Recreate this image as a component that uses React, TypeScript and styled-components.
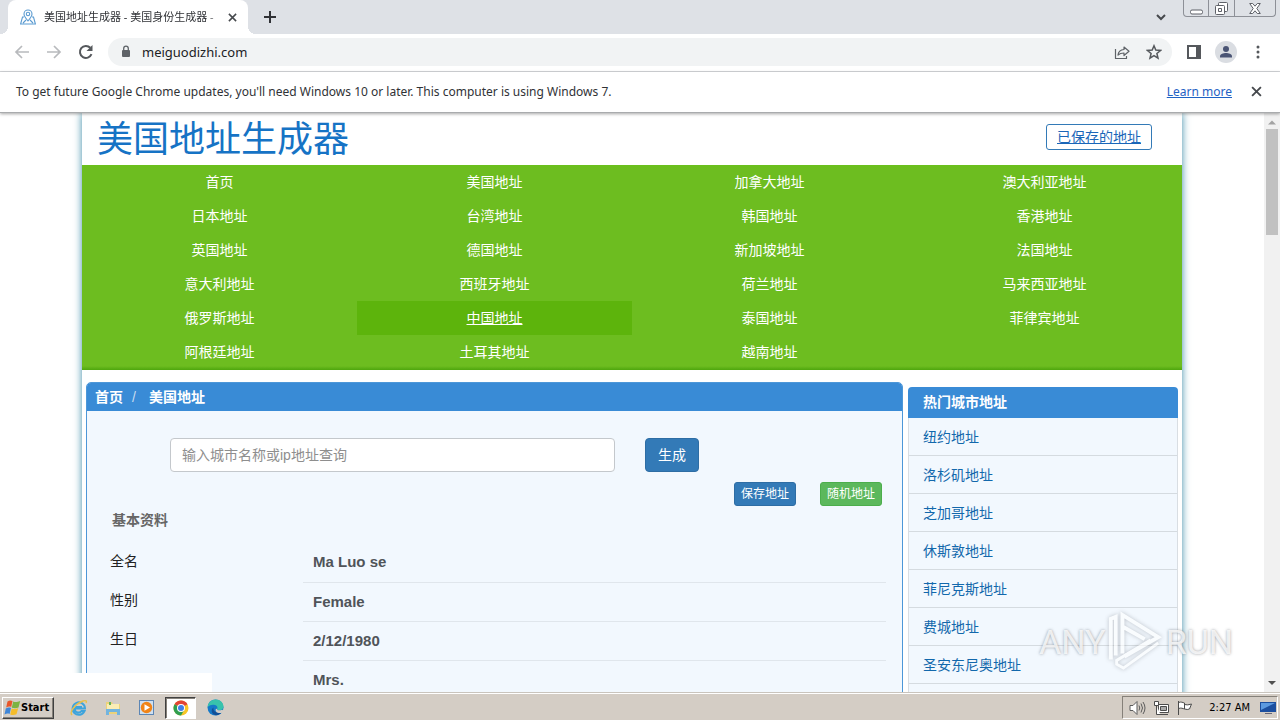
import React from 'react';
import styled, { createGlobalStyle, css } from 'styled-components';

const uiFont = `'DejaVu Sans Condensed', 'DejaVu Sans', 'Noto Sans CJK SC', sans-serif`;
const chromeFont = `'Noto Sans', 'Noto Sans CJK SC', sans-serif`;
const pageFont = `'Liberation Sans', 'Noto Sans CJK SC', sans-serif`;

const GlobalStyle = createGlobalStyle`
  *, *::before, *::after { box-sizing: border-box; }
  body { margin: 0; font-family: ${pageFont}; font-size: 14px; line-height: 20px; color: #333; background: #fff; }
  button, input { font: inherit; margin: 0; }
  button { cursor: pointer; }
  svg { display: block; flex: none; }
`;

const Desktop = styled.div`
  display: flex;
  flex-direction: column;
  height: 100vh;
  overflow: hidden;
`;

/* ---------- browser frame ---------- */

const TabStrip = styled.header`
  display: flex;
  flex: none;
  height: 34px;
  background: #dee1e6;
  font-family: ${chromeFont};
`;

const Tab = styled.div`
  display: flex;
  align-items: center;
  position: relative;
  width: 240px;
  margin-left: 8px;
  padding: 0 8px 0 12px;
  background: #fff;
  border-radius: 8px 8px 0 0;
  &::before, &::after {
    content: '';
    position: absolute;
    bottom: 0;
    width: 8px;
    height: 8px;
  }
  &::before { right: 100%; background: radial-gradient(circle at 0 0, transparent 8px, #fff 8px); }
  &::after { left: 100%; background: radial-gradient(circle at 100% 0, transparent 8px, #fff 8px); }
`;

const TabTitle = styled.span`
  flex: 1;
  min-width: 0;
  margin-left: 8px;
  overflow: hidden;
  white-space: nowrap;
  font-size: 11px;
  color: #303236;
  mask-image: linear-gradient(to right, #000 90%, transparent);
`;

const IconButton = styled.button<{ $size?: number }>`
  display: flex;
  flex: none;
  align-items: center;
  justify-content: center;
  width: ${(p) => p.$size ?? 32}px;
  height: ${(p) => p.$size ?? 32}px;
  padding: 0;
  border: 0;
  background: none;
  color: #55585c;
`;

const StripEnd = styled.div`
  display: flex;
  flex: 1;
  align-items: center;
  justify-content: space-between;
  padding-left: 6px;
`;

const WindowButtons = styled.div`
  display: flex;
  align-self: flex-start;
  width: 93px;
  height: 17px;
  margin-right: 4px;
  border: 1px solid #8d9097;
  border-top: 0;
  border-radius: 0 0 4px 4px;
`;

const WindowButton = styled.button<{ $grow?: number }>`
  display: flex;
  flex: ${(p) => p.$grow ?? 3};
  align-items: center;
  justify-content: center;
  padding: 0;
  border: 0;
  background: none;
  & + & { border-left: 1px solid #8d9097; }
`;

const StripTail = styled.div`
  display: flex;
  align-self: stretch;
  align-items: center;
  gap: 6px;
`;

const Toolbar = styled.nav`
  display: flex;
  flex: none;
  align-items: center;
  height: 38px;
  padding: 0 6px 1px;
  background: #fff;
  border-bottom: 1px solid #d5d7da;
`;

const AddressBar = styled.div`
  display: flex;
  flex: 1;
  align-items: center;
  height: 28px;
  margin: 0 6px;
  padding: 0 2px 0 12px;
  border-radius: 14px;
  background: #f1f3f4;
`;

const AddressInput = styled.input`
  flex: 1;
  min-width: 0;
  padding: 0 10px;
  border: 0;
  background: none;
  font-family: ${chromeFont};
  font-size: 13px;
  color: #202124;
`;

const Avatar = styled.span`
  display: flex;
  align-items: flex-end;
  justify-content: center;
  width: 22px;
  height: 22px;
  border-radius: 50%;
  background: #dadde2;
`;

const InfoBar = styled.div`
  display: flex;
  flex: none;
  align-items: center;
  position: relative;
  z-index: 1;
  height: 41px;
  padding: 0 12px 1px 16px;
  background: #fff;
  border-bottom: 1px solid #a9abad;
  box-shadow: 0 1px 3px rgba(0, 0, 0, 0.35);
  font-family: ${chromeFont};
  font-size: 12px;
  color: #303236;
`;

const InfoText = styled.span`
  flex: 1;
`;

const LearnMore = styled.a`
  margin-right: 12px;
  color: #1f62c4;
`;

/* ---------- web page ---------- */

const Viewport = styled.div`
  display: flex;
  flex: 1;
  min-height: 0;
  position: relative;
`;

const Scroller = styled.div`
  flex: 1;
  min-width: 0;
  overflow: hidden;
`;

const Page = styled.div`
  max-width: 1100px;
  min-height: 100%;
  margin: 0 auto;
  background: #fff;
  box-shadow: 0 0 8px #3c8ca8;
`;

const PageHeader = styled.div`
  display: flex;
  align-items: flex-start;
  justify-content: space-between;
  height: 52px;
  padding: 0 30px 0 15px;
`;

const SiteTitle = styled.h1`
  margin: 0;
  font-size: 36px;
  line-height: 54px;
  font-weight: 400;
  color: #1673c5;
`;

const SavedLink = styled.a`
  margin-top: 11px;
  padding: 2px 10px;
  border: 1px solid #337ab7;
  border-radius: 3px;
  color: #1a66b8;
`;

const Menu = styled.nav`
  display: grid;
  grid-template-columns: repeat(4, 1fr);
  padding-bottom: 1px;
  background: linear-gradient(#6abf1b, #6dbd20 5px, #6dbd20 calc(100% - 4px), #4ea60e);
`;

const MenuLink = styled.a<{ $active?: boolean }>`
  height: 34px;
  line-height: 34px;
  text-align: center;
  color: #fff;
  text-decoration: none;
  ${(p) => p.$active && css`
    background: #5db40c;
    text-decoration: underline;
  `}
`;

const Columns = styled.div`
  display: flex;
  align-items: flex-start;
  gap: 5px;
  padding: 12px 4px 0;
`;

const Panel = styled.main`
  flex: 1;
  min-width: 0;
  height: 600px;
  border: 1px solid #4d97d8;
  border-radius: 5px 5px 0 0;
  background: #f2f8fe;
`;

const Breadcrumb = styled.div`
  display: flex;
  gap: 9px;
  height: 28px;
  padding: 0 8px;
  border-radius: 4px 4px 0 0;
  background: #398bd6;
  line-height: 28px;
  font-weight: 700;
  color: #fff;
  a { color: inherit; text-decoration: none; }
  i { padding-right: 4px; font-style: normal; font-weight: 400; color: #c8dcf0; }
`;

const SearchForm = styled.form`
  display: flex;
  gap: 30px;
  padding: 27px 203px 10px 83px;
`;

const SearchInput = styled.input`
  flex: 1;
  min-width: 0;
  height: 34px;
  padding: 0 11px;
  border: 1px solid #c4c8cc;
  border-radius: 4px;
  background: #fff;
  &::placeholder { color: #8e8e8e; opacity: 1; }
`;

const Button = styled.button<{ $small?: boolean; $tone?: 'green' }>`
  padding: 0 ${(p) => (p.$small ? 6 : 12)}px;
  height: ${(p) => (p.$small ? 24 : 34)}px;
  border: 1px solid ${(p) => (p.$tone ? '#4cae4c' : '#2e6da4')};
  border-radius: ${(p) => (p.$small ? 3 : 4)}px;
  background: ${(p) => (p.$tone ? '#5cb85c' : '#337ab7')};
  font-size: ${(p) => (p.$small ? 12 : 14)}px;
  line-height: 20px;
  color: #fff;
`;

const Actions = styled.div`
  display: flex;
  justify-content: flex-end;
  gap: 24px;
  padding: 0 20px;
`;

const SectionTitle = styled.h2`
  margin: 4px 0 13px 25px;
  font-size: 14px;
  line-height: 20px;
  font-weight: 700;
  color: #666;
`;

const DataTable = styled.table`
  width: calc(100% - 31px);
  margin-left: 15px;
  border-collapse: collapse;
  table-layout: fixed;
  th, td { height: 39px; padding: 0; text-align: left; }
  th { width: 201px; padding: 0 0 4px 8px; font-weight: 400; color: #222; }
  td { padding-left: 10px; border-bottom: 1px solid #e0e6ec; font-size: 15px; font-weight: 700; color: #505459; }
`;

const Sidebar = styled.aside`
  width: 270px;
  margin-top: 5px;
`;

const SidebarTitle = styled.h2`
  height: 31px;
  margin: 0;
  padding-left: 15px;
  border-radius: 4px 4px 0 0;
  background: #398bd6;
  font-size: 14px;
  line-height: 31px;
  font-weight: 700;
  color: #fff;
`;

const CityList = styled.ul`
  margin: 0;
  padding: 0;
  border: 1px solid #d9dee3;
  border-top: 0;
  background: #f2f8fe;
  list-style: none;
  li { height: 38px; padding-left: 14px; border-bottom: 1px solid #d5dbe0; line-height: 38px; }
  a { color: #1268ac; text-decoration: none; }
`;

const Scrollbar = styled.div`
  display: flex;
  flex: none;
  flex-direction: column;
  align-items: center;
  width: 16px;
  padding: 7px 0 6px;
  background: #f1f1f1;
`;

const Thumb = styled.div`
  width: 12px;
  height: 106px;
  margin: 4px 0 auto;
  background: #c1c1c1;
`;

const StatusBubble = styled.div`
  position: absolute;
  left: 0;
  bottom: 0;
  width: 212px;
  height: 19px;
  background: #fff;
`;

const Watermark = styled.div`
  display: flex;
  align-items: center;
  justify-content: space-between;
  width: 194px;
  position: absolute;
  right: 47px;
  bottom: 18px;
  font-family: Roboto, 'Liberation Sans', sans-serif;
  font-size: 34px;
  line-height: 64px;
  color: rgba(255, 255, 255, 0.8);
  text-shadow: 0 0 3px rgba(90, 95, 105, 0.6);
  pointer-events: none;
`;

const WatermarkLogo = styled.svg`
  filter: drop-shadow(0 0 2px rgba(90, 95, 105, 0.6));
  opacity: 0.6;
`;

/* ---------- taskbar ---------- */

const Taskbar = styled.footer`
  display: flex;
  flex: none;
  align-items: center;
  height: 28px;
  padding: 3px 2px 1px;
  background: #d4cdc5;
  border-top: 1px solid #c9c4bd;
  box-shadow: inset 0 1px #fff;
  font-family: ${uiFont};
  font-size: 11px;
  color: #000;
`;

const StartButton = styled.button`
  display: flex;
  align-items: center;
  width: 52px;
  height: 22px;
  margin-right: 8px;
  padding: 0 1px;
  border: 1px solid;
  border-color: #fff #404040 #404040 #fff;
  background: #d4cdc5;
  box-shadow: inset -1px -1px #858079;
  font-weight: 700;
`;

const TaskButton = styled.button<{ $active?: boolean }>`
  display: flex;
  align-items: center;
  justify-content: center;
  width: ${(p) => (p.$active ? 31 : 34)}px;
  height: 22px;
  margin: ${(p) => (p.$active ? '0 2px 0 1px' : '0')};
  padding: 0;
  border: 1px solid transparent;
  background: none;
  ${(p) => p.$active && css`
    border-color: #404040 #fff #fff #404040;
    background: #fff;
    box-shadow: inset 1px 1px #858079;
  `}
`;

const Tray = styled.div`
  display: flex;
  align-items: center;
  gap: 7px;
  width: 156px;
  height: 23px;
  margin-left: auto;
  padding: 0 1px 0 5px;
  border: 1px solid;
  border-color: #858079 #fff #fff #858079;
`;

const Clock = styled.time`
  margin: 0 3px 0 auto;
  white-space: nowrap;
`;

/* ---------- icons ---------- */

const stroke = (color: string, width = 1.5) => ({
  fill: 'none', stroke: color, strokeWidth: width,
});

const MapIcon = () => (
  <svg width="16" height="16" viewBox="0 0 16 16" {...stroke('#5b9bd1', 1.1)}>
    <path d="M8 12C5 8.500 4 7 4 5a4 4 0 0 1 8 0c0 2-1 3.500-4 7z" />
    <circle cx="8" cy="5" r="1.700" />
    <path d="M4 8H2.500L.600 15h14.800L13.500 8H12M3 14l3-3M13 14l-3-3" />
  </svg>
);

const CrossIcon = ({ size = 9 }: { size?: number }) => (
  <svg width={size} height={size} viewBox="0 0 10 10" {...stroke('#46494d', 1.7)}><path d="M1 1l8 8M9 1L1 9" /></svg>
);

const PlusIcon = () => (
  <svg width="12" height="12" viewBox="0 0 12 12" {...stroke('#303236', 2)}><path d="M6 0v12M0 6h12" /></svg>
);

const ArrowIcon = ({ back }: { back?: boolean }) => (
  <svg width="16" height="16" viewBox="0 0 16 16" {...stroke('#b8babd', 1.7)}>
    <path d={back ? 'M15 8H2M8 2L2 8l6 6' : 'M1 8h13M8 2l6 6-6 6'} />
  </svg>
);

const ReloadIcon = () => (
  <svg width="16" height="16" viewBox="0 0 16 16" {...stroke('#55585c', 2)}>
    <path d="M13.500 10.200A6 6 0 1 1 12.300 3.800" /><path d="M14.500 1v6h-6z" fill="#55585c" stroke="none" />
  </svg>
);

const LockIcon = () => (
  <svg width="12" height="14" viewBox="0 0 12 14">
    <rect x="2" y="5" width="8" height="7" rx="1" fill="#5f6368" /><path d="M3.700 6V3.500a2.300 2.300 0 0 1 4.600 0V6" {...stroke('#5f6368', 1.3)} />
  </svg>
);

const ShareIcon = () => (
  <svg width="16" height="16" viewBox="0 0 16 16" {...stroke('#5f6368', 1.2)} strokeLinejoin="round">
    <path d="M1.500 5v9.500h11V12" /><path d="M4 11c.400-3.500 2.500-5.300 6-5.500V3l5 4.300-5 4.200V9C7.300 9 5.600 9.500 4 11z" />
  </svg>
);

const StarIcon = () => (
  <svg width="16" height="16" viewBox="0 0 16 16" {...stroke('#55585c', 1.5)}>
    <path d="M8 1.800l1.800 4.300 4.700.400-3.600 3 1.100 4.600L8 11.600l-4 2.500 1.100-4.600-3.600-3 4.700-.400z" />
  </svg>
);

const PanelIcon = () => (
  <svg width="14" height="14" viewBox="0 0 14 14"><rect x="1" y="1" width="12" height="12" {...stroke('#55585c', 2)} /><path d="M9 1h4v12H9z" fill="#55585c" /></svg>
);

const PersonIcon = () => (
  <svg width="22" height="22" viewBox="0 0 22 22" fill="#4a5474"><circle cx="11" cy="8" r="3" /><path d="M5 16.500v-1.200C5 13 8.500 12 11 12s6 1 6 3.300v1.200z" /></svg>
);

const DotsIcon = () => (
  <svg width="4" height="14" viewBox="0 0 4 14" fill="#55585c"><circle cx="2" cy="2" r="1.500" /><circle cx="2" cy="7" r="1.500" /><circle cx="2" cy="12" r="1.500" /></svg>
);

const ChevronIcon = () => (
  <svg width="10" height="7" viewBox="0 0 10 7" {...stroke('#46494d', 2)}><path d="M1 1l4 4 4-4" /></svg>
);

const ScrollArrow = ({ down }: { down?: boolean }) => (
  <svg width="8" height="5" viewBox="0 0 8 5" fill={down ? '#505050' : '#a3a3a3'}><path d={down ? 'M0 0h8L4 4z' : 'M0 4.500h8L4 .5z'} /></svg>
);

const PlayLogo = () => (
  <WatermarkLogo width="60" height="64" viewBox="0 0 62 64" {...stroke('#fff', 4)}>
    <path d="M5 50V8l5-2v40M17 44V4l37 23-35 20M17 16l23 13" />
    <path d="M54 33L18 59l-7-4v-4l35-21" strokeWidth="3" />
  </WatermarkLogo>
);

const WindowsLogo = () => (
  <svg width="17" height="16" viewBox="0 0 16 16">
    <path d="M3 1.500C5 0 6.500.300 8 1L6.700 7C5 6.200 3.500 6.500 1.700 7.500z" fill="#e8562a" />
    <path d="M8.700 1.500c2 .800 3.700.700 7-.500l-1.700 6.500c-2 1-4.700 1-6.700.300z" fill="#7cb342" />
    <path d="M1.300 8.500C3.300 7.300 5 7.400 6.500 8l-1.400 6c-1.700-.700-3.200-.600-5.100.500z" fill="#3f86d8" />
    <path d="M7.200 8.500c2 .800 4.200.700 6.500-.300l-1.700 6c-2 1-4.300 1-6.300.2z" fill="#f5bd2b" />
  </svg>
);

const ExplorerLogo = () => (
  <svg width="18" height="18" viewBox="0 0 18 18">
    <path d="M14.500 9.500H4.600C5 14 10 14.600 11.500 12H14.500A6.200 6.200 0 1 1 15 9.500zM5 8h7" {...stroke('#3ea4dc', 2)} />
    <path d="M2 16C-1 13 5 5 13 2c3-1 4 0 3 2" {...stroke('#e9c04a', 1.4)} />
  </svg>
);

const FolderLogo = () => (
  <svg width="18" height="18" viewBox="0 0 18 18">
    <path d="M2 3h6l1 2h7v10H2z" fill="#ecd27a" /><path d="M3 5h12v6H3z" fill="#faedb4" />
    <path d="M2 10h14v6h-3v-3H5v3H2z" fill="#72b4df" /><path d="M5 3h2v3H5z" fill="#63b35c" />
  </svg>
);

const MediaLogo = () => (
  <svg width="18" height="18" viewBox="0 0 18 18">
    <rect x="1.500" y="1.500" width="14" height="14" fill="#cfe0f0" stroke="#5c86b5" />
    <circle cx="8.500" cy="8.500" r="5.700" fill="#f08418" /><path d="M6.500 5.200v6.600L12 8.500z" fill="#fff" />
  </svg>
);

const ChromeLogo = () => (
  <svg width="16" height="16" viewBox="0 0 16 16">
    <circle cx="8" cy="8" r="7.500" fill="#f8c626" />
    <path d="M8 8L1.500 4.250A7.500 7.500 0 0 1 14.500 4.250z" fill="#e24435" />
    <path d="M8 8L1.500 4.250A7.500 7.500 0 0 0 8 15.500L11.200 9.900z" fill="#2f9e50" />
    <circle cx="8" cy="8" r="4" fill="#fff" /><circle cx="8" cy="8" r="3" fill="#3f7fe8" />
  </svg>
);

const EdgeLogo = () => (
  <svg width="17" height="17" viewBox="0 0 17 17">
    <circle cx="8.500" cy="8.500" r="8" fill="#1579c8" />
    <path d="M.6 8C1 3.500 4.500.5 8.700.5 13.300.5 16.500 4 16.500 7.500c0 2.500-2 3.600-4 3.600-1.500 0-2.700-.600-2.200-1.600 1.200-3.500-5.700-5.500-9.700-1.500z" fill="#38c3ac" />
    <path d="M6.500 8.500c-.800 4 3.500 6.200 8 4.700-1 1.600-3 3-5.500 3-4-.500-6-5-2.500-7.700z" fill="#144f96" />
    <path d="M10.200 9.700c-.500 1.200 1.500 2.500 5 1l1.500 1-1.500 2c-4 1.200-7.500-.600-6.300-3.700z" fill="#d4cdc5" />
  </svg>
);

const SpeakerIcon = () => (
  <svg width="18" height="16" viewBox="0 0 18 16" {...stroke('#5c5c5c', 1)}>
    <path d="M2 5.500h3l4-4v13l-4-4H2z" fill="#fff" /><path d="M11 5.500q1.500 2.500 0 5M13 3.500q3 4.500 0 9M15 2q4 6 0 12" />
  </svg>
);

const NetworkIcon = () => (
  <svg width="17" height="16" viewBox="0 0 17 16" {...stroke('#4c4c4c', 1)}>
    <path d="M5.500 4.500h10v8h-10z" fill="#fff" /><path d="M7.500 6.500h6v4h-6z" fill="#aaa" />
    <path d="M1.500 1.500h4v4h-4zM3.500 5.500v9h4M7 14.500h8" fill="#fff" />
  </svg>
);

const FlagIcon = () => (
  <svg width="16" height="16" viewBox="0 0 16 16" {...stroke('#4c4c4c', 1)}>
    <path d="M1.500 1v14M1.500 2.500c3-1 4 0 6 .5v6c-2-.5-3-1.500-6-.5zM7.500 4.500q3 1 7-.5l-2 5q-2 1-5 0z" fill="#fff" />
  </svg>
);

const MonitorIcon = () => (
  <svg width="16" height="14" viewBox="0 0 16 14"><path d="M0 1h16v10H0z" fill="#1c4f9f" /><path d="M1 2h14L1 9z" fill="#5c9ae0" /><path d="M5 12h7v1H5z" fill="#667" /></svg>
);

/* ---------- content ---------- */

const menuItems = [
  '首页', '美国地址', '加拿大地址', '澳大利亚地址',
  '日本地址', '台湾地址', '韩国地址', '香港地址',
  '英国地址', '德国地址', '新加坡地址', '法国地址',
  '意大利地址', '西班牙地址', '荷兰地址', '马来西亚地址',
  '俄罗斯地址', '中国地址', '泰国地址', '菲律宾地址',
  '阿根廷地址', '土耳其地址', '越南地址',
];

const cities = ['纽约地址', '洛杉矶地址', '芝加哥地址', '休斯敦地址', '菲尼克斯地址', '费城地址', '圣安东尼奥地址'];

const profile = [
  ['全名', 'Ma Luo se'],
  ['性别', 'Female'],
  ['生日', '2/12/1980'],
  ['', 'Mrs.'],
];

export default function App() {
  return (
    <Desktop>
      <GlobalStyle />
      <TabStrip>
        <Tab>
          <MapIcon />
          <TabTitle>美国地址生成器 - 美国身份生成器 -</TabTitle>
          <IconButton $size={16} aria-label="Close tab"><CrossIcon /></IconButton>
        </Tab>
        <StripEnd>
          <IconButton aria-label="New tab"><PlusIcon /></IconButton>
          <StripTail>
            <IconButton aria-label="Search tabs"><ChevronIcon /></IconButton>
            <WindowButtons>
              <WindowButton aria-label="Minimize">
                <svg width="13" height="13" viewBox="0 0 13 13"><rect x=".5" y="8" width="12" height="4" rx="1.500" fill="#fff" stroke="#5e6168" /></svg>
              </WindowButton>
              <WindowButton aria-label="Restore">
                <svg width="13" height="13" viewBox="0 0 13 13" fill="#fff" stroke="#5e6168"><rect x="3.500" y=".5" width="9" height="9" rx="1" /><rect x=".5" y="3.500" width="9" height="9" rx="1" /><path d="M3.500 6.500h3v3h-3z" /></svg>
              </WindowButton>
              <WindowButton $grow={5} aria-label="Close">
                <svg width="12" height="11" viewBox="0 0 12 11" fill="#fff" stroke="#5e6168"><path d="M.7.500h3L6 3.200 8.300.5h3L7.800 5.500l3.500 5h-3L6 7.800 3.700 10.500h-3l3.500-5z" /></svg>
              </WindowButton>
            </WindowButtons>
          </StripTail>
        </StripEnd>
      </TabStrip>

      <Toolbar>
        <IconButton aria-label="Back"><ArrowIcon back /></IconButton>
        <IconButton aria-label="Forward"><ArrowIcon /></IconButton>
        <IconButton aria-label="Reload"><ReloadIcon /></IconButton>
        <AddressBar>
          <LockIcon />
          <AddressInput aria-label="Address" defaultValue="meiguodizhi.com" />
          <IconButton aria-label="Share"><ShareIcon /></IconButton>
          <IconButton aria-label="Bookmark"><StarIcon /></IconButton>
        </AddressBar>
        <IconButton aria-label="Side panel"><PanelIcon /></IconButton>
        <IconButton aria-label="Profile"><Avatar><PersonIcon /></Avatar></IconButton>
        <IconButton aria-label="Menu"><DotsIcon /></IconButton>
      </Toolbar>

      <InfoBar>
        <InfoText>To get future Google Chrome updates, you'll need Windows 10 or later. This computer is using Windows 7.</InfoText>
        <LearnMore href="#learn">Learn more</LearnMore>
        <IconButton $size={24} aria-label="Dismiss"><CrossIcon size={11} /></IconButton>
      </InfoBar>

      <Viewport>
        <Scroller>
          <Page>
            <PageHeader>
              <SiteTitle>美国地址生成器</SiteTitle>
              <SavedLink href="#saved">已保存的地址</SavedLink>
            </PageHeader>
            <Menu>
              {menuItems.map((item) => (
                <MenuLink key={item} href="#menu" $active={item === '中国地址'}>{item}</MenuLink>
              ))}
            </Menu>
            <Columns>
              <Panel>
                <Breadcrumb><a href="#home">首页</a><i>/</i><span>美国地址</span></Breadcrumb>
                <SearchForm>
                  <SearchInput aria-label="输入城市名称或ip地址查询" placeholder="输入城市名称或ip地址查询" />
                  <Button type="button">生成</Button>
                </SearchForm>
                <Actions>
                  <Button $small>保存地址</Button>
                  <Button $small $tone="green">随机地址</Button>
                </Actions>
                <SectionTitle>基本资料</SectionTitle>
                <DataTable>
                  <tbody>
                    {profile.map(([label, value]) => (
                      <tr key={value}><th scope="row">{label}</th><td>{value}</td></tr>
                    ))}
                  </tbody>
                </DataTable>
              </Panel>
              <Sidebar>
                <SidebarTitle>热门城市地址</SidebarTitle>
                <CityList>
                  {cities.map((city) => <li key={city}><a href="#city">{city}</a></li>)}
                  <li />
                </CityList>
              </Sidebar>
            </Columns>
          </Page>
        </Scroller>
        <Scrollbar><ScrollArrow /><Thumb /><ScrollArrow down /></Scrollbar>
        <StatusBubble />
        <Watermark><span>ANY</span><PlayLogo /><span>RUN</span></Watermark>
      </Viewport>

      <Taskbar>
        <StartButton><WindowsLogo />Start</StartButton>
        <TaskButton aria-label="Internet Explorer"><ExplorerLogo /></TaskButton>
        <TaskButton aria-label="Explorer"><FolderLogo /></TaskButton>
        <TaskButton aria-label="Media Player"><MediaLogo /></TaskButton>
        <TaskButton $active aria-label="Chrome"><ChromeLogo /></TaskButton>
        <TaskButton aria-label="Edge"><EdgeLogo /></TaskButton>
        <Tray>
          <SpeakerIcon /><NetworkIcon /><FlagIcon />
          <Clock>2:27 AM</Clock>
          <MonitorIcon />
        </Tray>
      </Taskbar>
    </Desktop>
  );
}
